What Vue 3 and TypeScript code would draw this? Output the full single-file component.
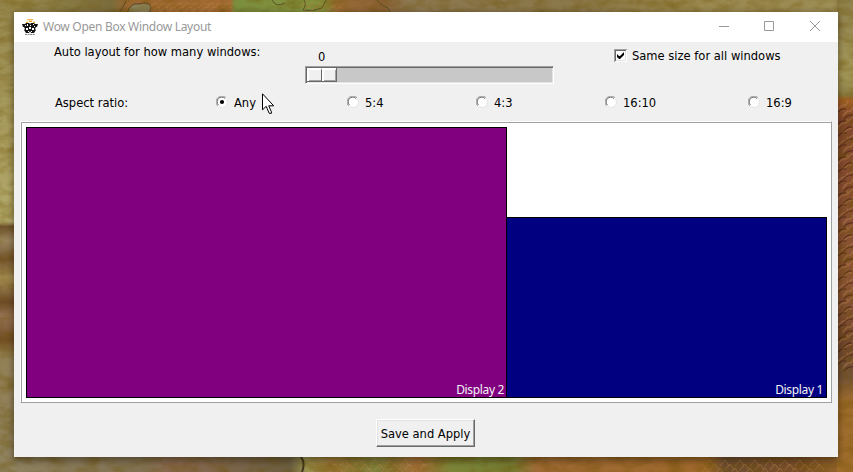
<script setup lang="ts">
import { ref } from 'vue'

interface Ratio { label: string; width: number }

const count = ref<number>(0)
const sameSize = ref<boolean>(true)
const selected = ref<string>('Any')
const ratios: Ratio[] = [
  { label: 'Any', width: 131 },
  { label: '5:4', width: 129 },
  { label: '4:3', width: 129 },
  { label: '16:10', width: 143 },
  { label: '16:9', width: 60 },
]
const scales: number[] = Array.from({ length: 44 }, (_, i) => i)
</script>

<template>
  <main class="desktop">
    <svg class="wallpaper" viewBox="0 0 853 472" aria-hidden="true">
      <defs>
        <filter id="soft" x="-10%" y="-10%" width="120%" height="120%"><feGaussianBlur stdDeviation="3" /></filter>
        <filter id="grain" x="0" y="0" width="100%" height="100%">
          <feTurbulence type="fractalNoise" baseFrequency=".06 .11" numOctaves="4" seed="8" />
          <feColorMatrix values="0 0 0 0 .15  0 0 0 0 .08  0 0 0 0 0  1.7 0 0 0 -.62" />
        </filter>
        <linearGradient id="topBand">
          <stop offset="0" stop-color="#9b8d50" /><stop offset=".13" stop-color="#7b6c3c" />
          <stop offset=".15" stop-color="#9a6730" /><stop offset=".27" stop-color="#a56c36" />
          <stop offset=".275" stop-color="#7a8e3e" /><stop offset=".38" stop-color="#869541" />
          <stop offset=".395" stop-color="#9a6b36" /><stop offset=".45" stop-color="#8c6238" />
          <stop offset=".48" stop-color="#8c7852" /><stop offset=".68" stop-color="#8b784a" />
          <stop offset=".8" stop-color="#99874e" /><stop offset="1" stop-color="#9d8f57" />
        </linearGradient>
        <linearGradient id="bottomBand">
          <stop offset="0" stop-color="#8e8260" /><stop offset=".17" stop-color="#817153" />
          <stop offset=".2" stop-color="#8a6a54" /><stop offset=".34" stop-color="#6b5f42" />
          <stop offset=".36" stop-color="#9c9453" /><stop offset=".39" stop-color="#977536" />
          <stop offset=".44" stop-color="#7d803b" /><stop offset=".49" stop-color="#a36e39" />
          <stop offset=".53" stop-color="#7a8437" /><stop offset=".6" stop-color="#778038" />
          <stop offset=".63" stop-color="#9f6a35" /><stop offset=".83" stop-color="#9f692c" />
          <stop offset=".85" stop-color="#6c4d31" /><stop offset=".94" stop-color="#7a4f29" />
          <stop offset="1" stop-color="#9f6d2e" />
        </linearGradient>
        <linearGradient id="leftBand" x2="0" y2="1">
          <stop offset="0" stop-color="#978950" /><stop offset=".3" stop-color="#aa9d5f" />
          <stop offset=".47" stop-color="#b2a96c" /><stop offset=".48" stop-color="#705230" />
          <stop offset=".51" stop-color="#98845c" /><stop offset=".55" stop-color="#755533" />
          <stop offset=".59" stop-color="#a58f56" /><stop offset=".64" stop-color="#6e4a29" />
          <stop offset=".67" stop-color="#967356" /><stop offset=".72" stop-color="#744f2a" />
          <stop offset=".75" stop-color="#938057" /><stop offset="1" stop-color="#8e825f" />
        </linearGradient>
        <linearGradient id="rightBand" x2="0" y2="1">
          <stop offset="0" stop-color="#8f814e" /><stop offset=".16" stop-color="#a69a5c" />
          <stop offset=".202" stop-color="#8c7d43" /><stop offset=".21" stop-color="#a46225" />
          <stop offset=".25" stop-color="#80472c" /><stop offset=".6" stop-color="#8c5536" />
          <stop offset=".73" stop-color="#71472e" /><stop offset=".8" stop-color="#735437" />
          <stop offset=".85" stop-color="#9f6c2f" /><stop offset="1" stop-color="#9f6d2b" />
        </linearGradient>
      </defs>
      <rect width="853" height="14" fill="url(#topBand)" />
      <rect y="456" width="853" height="16" fill="url(#bottomBand)" />
      <rect width="15" height="472" fill="url(#leftBand)" />
      <rect x="837" width="16" height="472" fill="url(#rightBand)" />
      <path d="M118 14Q123 8 126 1M127 14Q130 2 139 4Q149 1 151 7Q151 13 143 15Z" fill="#8b8157" stroke="#5c4526" />
      <path d="M272 0Q276 8 285 3M304 0Q307 5 303 10Q313 12 322 8L326 0M377 0Q381 6 388 8L391 14" fill="none" stroke="#5a5326" />
      <path d="M300 456Q306 462 302 472" fill="none" stroke="#3f351c" stroke-width="2" />
      <g fill="none" stroke-linecap="round">
        <path v-for="i in scales" :key="'r' + i" :transform="`translate(${838 + (i % 3) * 5} ${104 + i * 6})`" d="M0 6Q4 0 8 1L10 -3" stroke="#b17950" stroke-width="1.3" opacity=".65" />
        <path v-for="i in scales" :key="'d' + i" :transform="`translate(${837 + (i % 2) * 7} ${107 + i * 6})`" d="M0 6Q4 1 9 2" stroke="#45200f" stroke-width="1.2" opacity=".65" />
        <path v-for="i in scales" :key="'t' + i" :transform="`translate(${(i < 30 ? 151 : 220) + i * 2.7} ${1 + (i % 3) * 4})`" d="M0 6Q3 0 6 3" stroke="#bd863e" opacity=".55" />
        <path v-for="i in scales" :key="'b' + i" :transform="`translate(${(i < 20 ? 325 : 600) + i * 5} ${459 + (i % 3) * 4})`" d="M0 7L5 1L9 7" stroke="#bd8751" opacity=".5" />
      </g>
      <rect width="853" height="472" filter="url(#grain)" opacity=".5" />
      <rect x="13" y="13" width="826" height="448" fill="#180f00" opacity=".4" filter="url(#soft)" />
    </svg>

    <section class="window">
      <header class="titlebar">
        <svg class="logo" viewBox="0 0 16 16" aria-hidden="true">
          <path d="M5 .7h6M4 3.4h2m1-1h3m1 1h2" stroke="#f0a52b" stroke-width="1.1" />
          <path d="M0 5h3l1-1h3l1 1 1-1h3l1 1h3l-1 3h-1l-1 2 1 1-2 3H9l-1-2-1 2H4l-2-3 1-1-1-2H1z" fill="#151515" />
          <path d="M3 6h1v1H3zm2-1h1v2H5zm3 1h1v1H8zm3-1h1v1h-1zm1 2h1v1h-1zM4 9h2v2H4zm3-1h2v2H7zm3 1h2v2h-2zM6 12h1v1H6zm3 0h1v1H9z" fill="#fff" />
          <path d="M3 15.4h10" stroke="#777" stroke-dasharray="2 .6" />
        </svg>
        <h1>Wow Open Box Window Layout</h1>
        <svg class="controls" viewBox="0 0 112 12" aria-hidden="true">
          <path d="M5 6.500h10M50.500 1.500h9v9h-9zM96 1l10 10M106 1L96 11" fill="none" stroke="#999" />
        </svg>
      </header>

      <div class="settings">
        <label class="auto-label">Auto layout for how many windows:</label>
        <div class="slider">
          <output>{{ count }}</output>
          <div class="track"><div class="thumb"><i></i><i></i></div></div>
        </div>
        <label class="same" @click="sameSize = !sameSize">
          <svg class="check" viewBox="0 0 13 13">
            <path d="M0 0h13v13H0z" fill="#fff" />
            <path d="M0 13V0h13v1H1v12z" fill="#a0a0a0" />
            <path d="M1 12V1h11v1H2v10z" fill="#696969" />
            <path d="M2 11.500h9.500V2" fill="none" stroke="#e3e3e3" />
            <path v-if="sameSize" d="M3 5v3l2 2h1l4-4V3L6 7H5z" fill="#000" />
          </svg>
          <span>Same size for all windows</span>
        </label>
      </div>

      <div class="ratios">
        <span class="aspect">Aspect ratio:</span>
        <label v-for="r in ratios" :key="r.label" class="ratio" :style="{ width: r.width + 'px' }" @click="selected = r.label">
          <svg class="radio" viewBox="0 0 12 12">
            <circle cx="6" cy="6" r="5.200" fill="#fff" />
            <path d="M1.700 10A5.500 5.500 0 0 1 10 1.700" fill="none" stroke="#a0a0a0" />
            <path d="M2.500 9A4.500 4.500 0 0 1 9 2.500" fill="none" stroke="#696969" />
            <path d="M10 3A4.500 4.500 0 0 1 3 10" fill="none" stroke="#e3e3e3" />
            <circle v-if="selected === r.label" cx="6" cy="6" r="2.100" fill="#000" />
          </svg>
          <span>{{ r.label }}</span>
        </label>
      </div>

      <div class="canvas">
        <div class="display second"><span>Display 2</span></div>
        <div class="display first"><span>Display 1</span></div>
      </div>
      <footer><button type="button">Save and Apply</button></footer>
    </section>

    <svg class="cursor" viewBox="0 0 13 22" aria-hidden="true">
      <path d="M.5 .8v16l3.700-3.500 3 7h2.200v-1.500l-2.700-6h5z" fill="#fff" stroke="#000" />
    </svg>
  </main>
</template>

<style>
body { margin: 0; overflow: hidden; }
</style>

<style scoped>
.desktop { position: relative; width: 853px; height: 472px; padding: 12px 15px 15px 14px; box-sizing: border-box; overflow: hidden; background: #807044; font: 12.8px/16px "DejaVu Sans Condensed", "Noto Sans", sans-serif; color: #000; }
.wallpaper { position: absolute; inset: 0; width: 853px; height: 472px; }
.window { position: relative; width: 824px; height: 445px; background: #f0f0f0; display: flex; flex-direction: column; }
.titlebar { flex: 0 0 30px; display: flex; align-items: center; background: #fff; }
.logo { width: 16px; height: 16px; margin-left: 8px; }
h1 { margin: 0 auto 0 5px; font: 12px/16px "Noto Sans", sans-serif; letter-spacing: -.29px; color: #999; white-space: nowrap; }
.controls { width: 112px; height: 12px; margin: -3px 12px 0 0; }
.settings { flex: 0 0 46px; display: flex; align-items: flex-start; white-space: nowrap; }
.auto-label { width: 251px; padding: 2px 0 0 40px; }
.slider { width: 249px; padding-top: 7px; }
output { display: block; height: 17px; padding-left: 13px; }
.track { width: 249px; height: 18px; box-sizing: border-box; border: 1px solid; border-color: #a0a0a0 #fff #fff #a0a0a0; box-shadow: inset 1px 1px #696969, inset -1px -1px #e3e3e3; padding: 1px; background: #c8c8c8; }
.thumb { display: flex; width: 30px; height: 14px; box-sizing: border-box; border: solid #696969; border-width: 0 1px 1px 0; box-shadow: inset -1px -1px #a0a0a0; background: #f0f0f0; }
.thumb i { width: 14px; box-sizing: border-box; border: solid #fff; border-width: 2px 0 0 2px; }
.thumb i:first-child { width: 15px; border-right: 1px solid #696969; }
.same { display: flex; margin-left: 60px; padding-top: 6px; }
.check { width: 13px; height: 13px; margin: 1px 5px 0 0; }
.ratios { flex: 0 0 33px; display: flex; padding: 6px 0 0 41px; box-sizing: border-box; white-space: nowrap; }
.aspect { width: 161px; padding-top: 1px; }
.ratio { display: flex; }
.radio { width: 12px; height: 12px; margin: 2px 6px 0 0; }
.ratio span { padding-top: 1px; }
.canvas { width: 812px; height: 282px; margin-left: 6px; box-sizing: border-box; padding: 5px 4px 4px 5px; border: 1px solid; border-color: #fff #a0a0a0 #a0a0a0 #fff; box-shadow: inset 1px 1px #a0a0a0, inset -1px -1px #fff; background: #fff; display: flex; align-items: flex-end; }
.display { display: flex; align-items: flex-end; justify-content: flex-end; box-sizing: border-box; border: 1px solid #000; color: #f4f4f4; font: 12px/14px "Noto Sans", sans-serif; letter-spacing: -.34px; }
.second { width: 481px; height: 271px; background: #800080; padding-right: 2px; }
.first { width: 321px; height: 181px; margin-left: -1px; background: #000080; padding-right: 3px; }
footer { display: flex; justify-content: center; padding: 16px 1px 0 0; }
button { width: 99px; height: 28px; padding: 1px 0 0; border: 1px solid; border-color: #fff #696969 #696969 #fff; box-shadow: inset -1px -1px #a0a0a0, inset 1px 1px #e3e3e3; background: #f0f0f0; font: inherit; color: #000; white-space: nowrap; }
.cursor { position: absolute; left: 262px; top: 93px; width: 13px; height: 22px; }
</style>
